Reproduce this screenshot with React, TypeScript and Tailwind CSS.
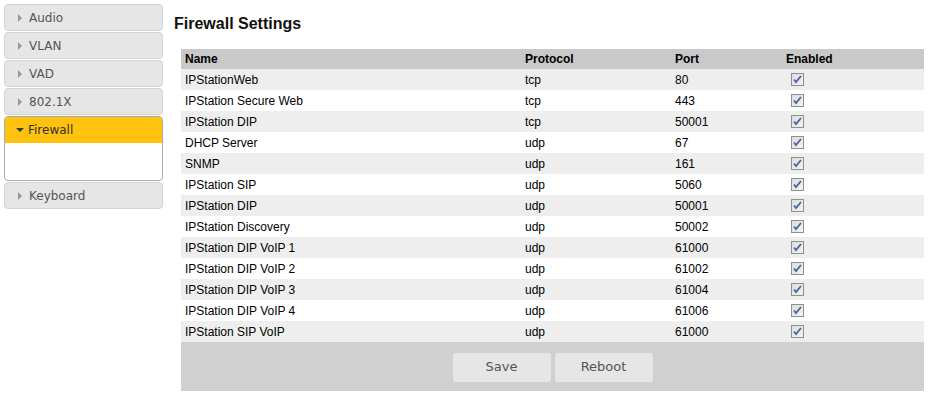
import React from "react";

const rows: [string, string, string][] = [
  ["IPStationWeb", "tcp", "80"],
  ["IPStation Secure Web", "tcp", "443"],
  ["IPStation DIP", "tcp", "50001"],
  ["DHCP Server", "udp", "67"],
  ["SNMP", "udp", "161"],
  ["IPStation SIP", "udp", "5060"],
  ["IPStation DIP", "udp", "50001"],
  ["IPStation Discovery", "udp", "50002"],
  ["IPStation DIP VoIP 1", "udp", "61000"],
  ["IPStation DIP VoIP 2", "udp", "61002"],
  ["IPStation DIP VoIP 3", "udp", "61004"],
  ["IPStation DIP VoIP 4", "udp", "61006"],
  ["IPStation SIP VoIP", "udp", "61000"],
];

function Check() {
  return (
    <svg width="13" height="13" viewBox="0 0 13 13" className="block">
      <defs>
        <linearGradient id="cbg" x1="0" y1="0" x2="1" y2="1">
          <stop offset="0" stopColor="#dcdcdc" />
          <stop offset="1" stopColor="#f4f4f4" />
        </linearGradient>
      </defs>
      <rect x="0.5" y="0.5" width="12" height="12" fill="url(#cbg)" stroke="#8e8f8f" />
      <path d="M3 6.5 L5 9 L10 3" fill="none" stroke="#4b5fa8" strokeWidth="1.8" />
    </svg>
  );
}

function Arrow({ down }: { down?: boolean }) {
  return down ? (
    <svg width="8" height="8" viewBox="0 0 8 8" className="block">
      <path d="M0 2 L8 2 L4 6 Z" fill="#3a3a3a" />
    </svg>
  ) : (
    <svg width="8" height="8" viewBox="0 0 8 8" className="block">
      <path d="M1 0 L5 4 L1 8 Z" fill="#999" />
    </svg>
  );
}

function Item({ label }: { label: string }) {
  return (
    <div className="h-[27px] mb-[1px] flex items-center rounded-[4px] border border-[#d4d4d4] bg-[#e6e6e6] pl-[12px] gap-[4px] text-[12px] text-[#555]">
      <Arrow />
      <span>{label}</span>
    </div>
  );
}

export default function App() {
  return (
    <div className="flex w-[929px] h-[397px] bg-white" style={{ fontFamily: "'Liberation Sans', Arial, sans-serif" }}>
      <div className="w-[159px] ml-[4px] mt-[4px] shrink-0" style={{ fontFamily: "'DejaVu Sans', Verdana, sans-serif" }}>
        <Item label="Audio" />
        <Item label="VLAN" />
        <Item label="VAD" />
        <Item label="802.1X" />
        <div className="h-[65px] mb-[1px] mt-[1px] rounded-[4px] border border-[#aaaaaa] overflow-hidden bg-white">
          <div className="h-[26px] bg-[#ffc20e] flex items-center pl-[11px] gap-[4px] text-[12px] text-[#333]">
            <Arrow down />
            <span>Firewall</span>
          </div>
        </div>
        <Item label="Keyboard" />
      </div>
      <div className="ml-[11px] flex-1 mr-[5px]">
        <h1 className="mt-[14px] h-[35px] text-[16px] font-bold text-[#111] leading-[20px]">Firewall Settings</h1>
        <div className="ml-[7px] text-[12px] text-black">
          <div className="h-[20px] bg-[#c9c9c9] grid grid-cols-[340px_150px_111px_1fr] items-center font-bold">
            <div className="pl-[4px]">Name</div>
            <div className="pl-[4px]">Protocol</div>
            <div className="pl-[4px]">Port</div>
            <div className="pl-[4px]">Enabled</div>
          </div>
          {rows.map((r, i) => (
            <div key={i} className={`h-[21px] grid grid-cols-[340px_150px_111px_1fr] items-center ${i % 2 === 0 ? "bg-[#eeeeee]" : "bg-white"}`}>
              <div className="pl-[4px]">{r[0]}</div>
              <div className="pl-[4px]">{r[1]}</div>
              <div className="pl-[4px]">{r[2]}</div>
              <div className="pl-[9px]"><Check /></div>
            </div>
          ))}
          <div className="h-[49px] bg-[#d0d0d0] flex items-center justify-center gap-[4px] pt-[1px]" style={{ fontFamily: "'DejaVu Sans', Verdana, sans-serif" }}>
            <button className="w-[98px] h-[29px] rounded-[3px] bg-[#e6e6e6] text-[13px] text-[#555]">Save</button>
            <button className="w-[98px] h-[29px] rounded-[3px] bg-[#e6e6e6] text-[13px] text-[#555]">Reboot</button>
          </div>
        </div>
      </div>
    </div>
  );
}
